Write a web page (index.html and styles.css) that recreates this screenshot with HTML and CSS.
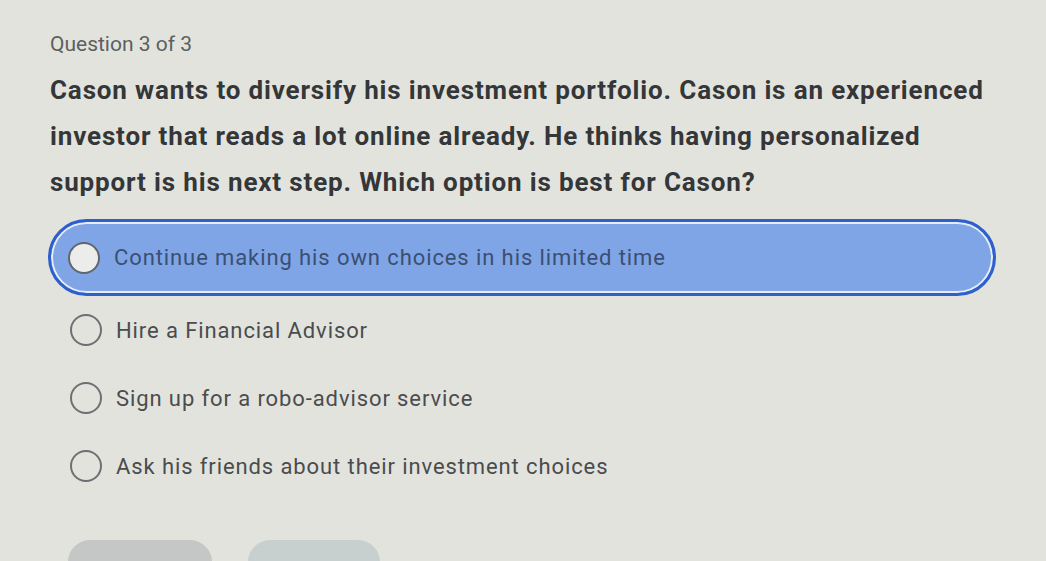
FILE: index.html
```html
<!DOCTYPE html>
<html>
<head>
    <title>Quiz</title>
    <link rel="stylesheet" href="styles.css">
</head>
<body>
    <div class="quiz">
        <p class="counter">Question 3 of 3</p>

        <p class="question">Cason wants to diversify his investment portfolio. Cason is an experienced investor that reads a lot online already. He thinks having personalized support is his next step. Which option is best for Cason?</p>

        <div class="options">
            <label class="option selected">
                <span class="radio"></span>
                <span class="option-text">Continue making his own choices in his limited time</span>
            </label>
            <label class="option">
                <span class="radio"></span>
                <span class="option-text">Hire a Financial Advisor</span>
            </label>
            <label class="option">
                <span class="radio"></span>
                <span class="option-text">Sign up for a robo-advisor service</span>
            </label>
            <label class="option">
                <span class="radio"></span>
                <span class="option-text">Ask his friends about their investment choices</span>
            </label>
        </div>

        <div class="actions">
            <button class="btn btn-back"></button>
            <button class="btn btn-next"></button>
        </div>
    </div>
</body>
</html>
```

FILE: styles.css
```css
/* quiz page */
body {
    margin: 0;
    background: #e2e3dd;
    font-family: Roboto, "Liberation Sans", sans-serif;
    color: #3a3c3d;
    overflow: hidden;
}

.quiz {
    width: 946px;
    padding: 30px 0 0 50px;
}

.counter {
    margin: 0;
    font-size: 21px;
    color: #5c5f61;
    line-height: 28px;
}

.question {
    margin: 9px 0 0 0;
    font-size: 26px;
    font-weight: 700;
    letter-spacing: 0.85px;
    line-height: 46px;
    color: #343638;
}

.options {
    margin-top: 14px;
    display: flex;
    flex-direction: column;
}

.option {
    display: flex;
    align-items: center;
    gap: 14px;
    height: 68px;
    padding-left: 20px;
    box-sizing: border-box;
    font-size: 22px;
    letter-spacing: 0.9px;
    color: #4a4c4e;
    cursor: pointer;
}

.option.selected {
    height: 77px;
    margin-left: -2px;
    padding-left: 17px;
    background: #7fa5e6;
    border: 3px solid #2e5fcc;
    border-radius: 40px;
    box-shadow: inset 0 0 0 2px #e4ecf8;
    color: #3b4f72;
}

.radio {
    width: 28px;
    height: 28px;
    border: 2px solid #6d7072;
    border-radius: 50%;
    flex-shrink: 0;
}

.selected .radio {
    background: #ecedea;
    border-color: #5f6670;
}

.actions {
    margin-top: 40px;
    display: flex;
    gap: 36px;
    padding-left: 18px;
}

.btn {
    border: none;
    height: 44px;
    border-radius: 22px;
    background: #c5c7c7;
}

.btn-back {
    width: 144px;
}

.btn-next {
    width: 132px;
    background: #c8cfcf;
}
```
